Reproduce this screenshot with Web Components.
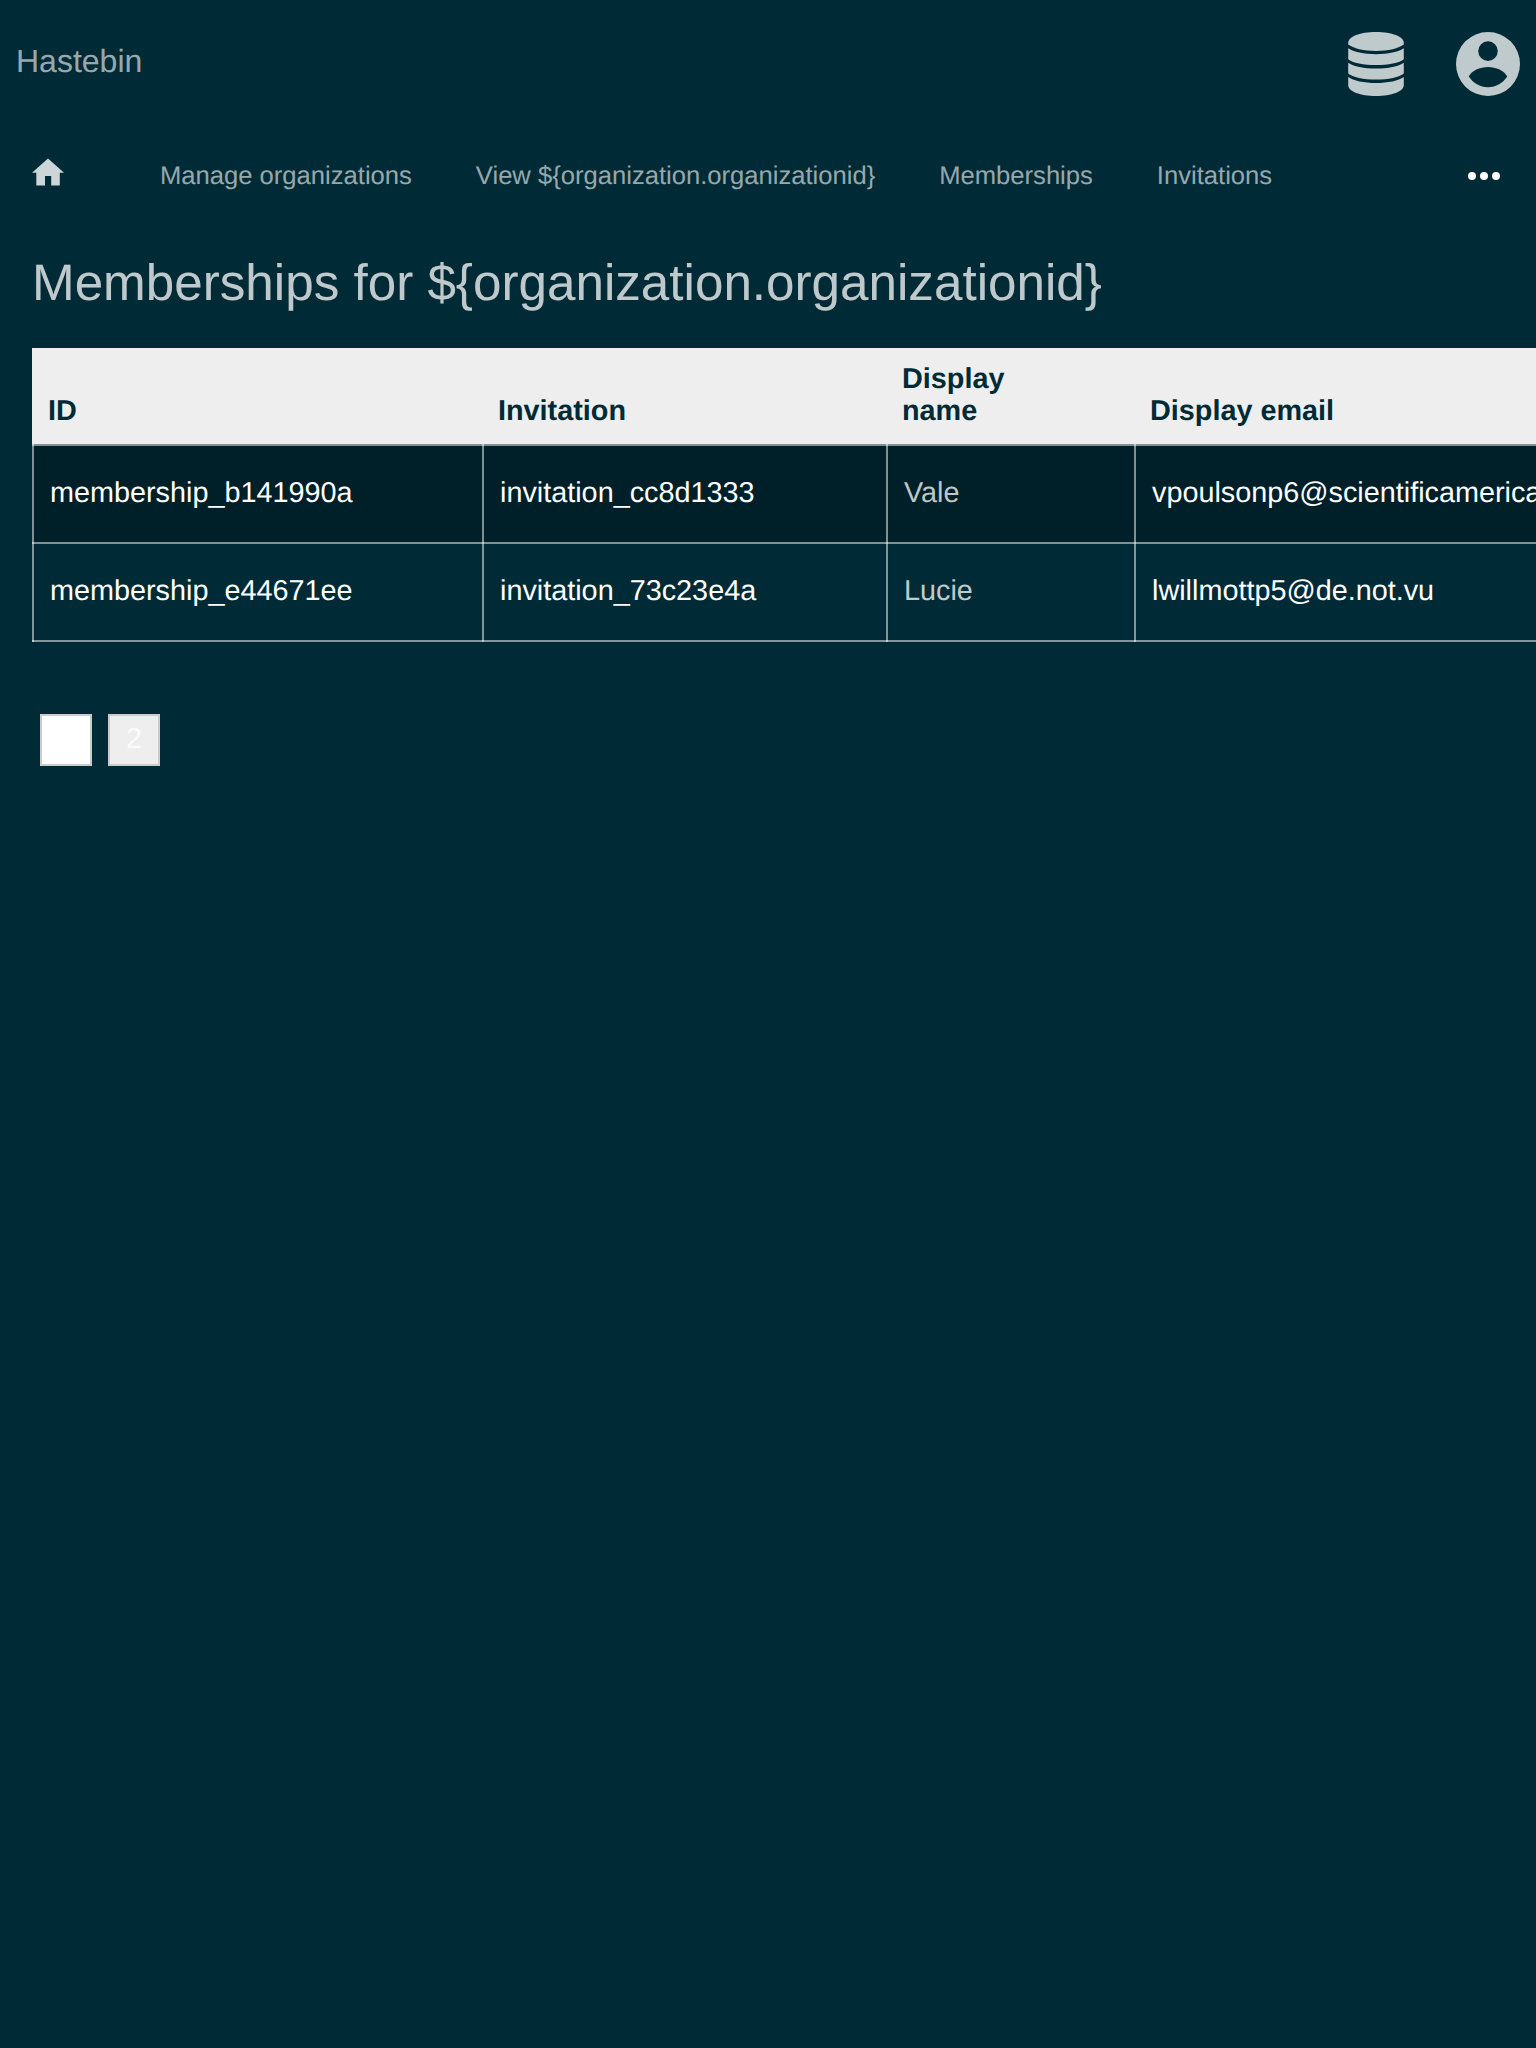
<!DOCTYPE html>
<html lang="en">
<head>
<meta charset="utf-8">
<title>Hastebin</title>
<style>
html,body{margin:0;height:100%;background:#002b36;overflow:hidden}
body{font-family:"Liberation Sans",Arial,sans-serif;color:#fff;text-rendering:geometricPrecision}
</style>
</head>
<body>
<hb-app></hb-app>
<script>
const define = (name, html) => customElements.define(name, class extends HTMLElement {
  constructor() {
    super();
    this.attachShadow({ mode: 'open' }).innerHTML = html;
  }
});

define('hb-header', `
<style>
:host{display:flex;align-items:center;justify-content:space-between;height:128px;padding:0 16px;box-sizing:border-box}
.brand{font-size:32px;line-height:36px;color:rgba(255,255,255,.6);padding-bottom:6px}
.tools{display:flex;gap:48px}
svg{display:block;width:64px;height:64px;fill:#bfcacd}
</style>
<div class="brand"><slot></slot></div>
<div class="tools">
<svg viewBox="0 0 64 64"><path d="M4.200 11C4.200 4.600 16 0 32 0s27.800 4.600 27.800 11v1.500C55 16.200 44 19 32 19S9 16.200 4.200 12.500z"/><path d="M4.200 16.300c5 3.700 16 5.900 27.800 5.900s22.800-2.200 27.800-5.900v10.900c-4 3.500-15.800 5.900-27.800 5.900S8.200 30.700 4.200 27.200z"/><path d="M4.200 30.700c5 3.700 16 5.900 27.800 5.900s22.800-2.200 27.800-5.900v10.700c-4 3.500-15.800 6.200-27.800 6.200S8.200 44.900 4.200 41.400z"/><path d="M4.200 45c5 3.700 16 6 27.800 6s22.800-2.300 27.800-6v8c0 6.400-12 11-27.800 11S4.200 59.400 4.200 53z"/></svg>
<svg viewBox="0 0 64 64"><path fill-rule="evenodd" d="M32 0a32 32 0 1 0 0 64a32 32 0 1 0 0-64zM32 9.300a9.800 9.800 0 1 1 0 19.600a9.800 9.800 0 1 1 0-19.600zM12.800 44.500C15.500 38.500 24 34.900 32 34.900s16.500 3.600 19.200 9.600C47 51 40 55.200 32 55.200S17 51 12.800 44.500z"/></svg>
</div>`);

define('hb-nav', `
<style>
:host{display:flex;align-items:center;height:96px;padding:0 36px 0 32px;box-sizing:border-box}
nav{display:flex;gap:64px;margin-left:96px;flex:1}
svg{display:block;fill:#ccd5d7}
.more{fill:#fff}
.home{margin-top:-8px}
</style>
<svg class="home" width="32" height="28" viewBox="0 0 32 28"><path d="M16 .5L0 14.800h4.300v12.700h8.700v-9.500h6.200v9.500h8.600V14.800H32z"/></svg>
<nav><slot></slot></nav>
<svg class="more" width="32" height="8" viewBox="0 0 32 8"><circle cx="4" cy="4" r="4"/><circle cx="16" cy="4" r="4"/><circle cx="28" cy="4" r="4"/></svg>`);

define('hb-link', `
<style>:host{display:block;font-size:25.6px;line-height:30px;color:rgba(255,255,255,.6);white-space:nowrap}</style><slot></slot>`);

define('hb-title', `
<style>:host{display:block}h1{margin:0;font-weight:400;font-size:51.2px;line-height:60px;color:rgba(255,255,255,.75);white-space:nowrap}</style><h1><slot></slot></h1>`);

define('hb-row', `
<style>
:host{display:grid;grid-template-columns:450px 404px 248px 560px;height:98px}
:host([head]){height:96px;background:#eee}
:host([odd]){height:100px;background:#002029}
</style><slot></slot>`);

define('hb-cell', `
<style>
:host{--line:linear-gradient(rgba(255,255,255,.5),rgba(255,255,255,.5));display:flex;align-items:center;box-sizing:border-box;padding:0 16px 4px 18px;font-size:28.8px;line-height:32px;color:#fff;white-space:nowrap;background:var(--line) 0 0/2px 100% no-repeat,var(--line) 0 100%/100% 2px no-repeat}
:host([first]){padding-top:2px;background:var(--line) 0 0/2px 100% no-repeat,var(--line) 0 100%/100% 2px no-repeat,var(--line) 0 0/100% 2px no-repeat}
:host([plain]){color:rgba(255,255,255,.75)}
:host([th]){align-items:flex-end;background:none;padding:0 88px 17px 16px;font-weight:700;color:#002b36;white-space:normal}
</style><slot></slot>`);

define('hb-table', `
<style>:host{display:block;overflow:hidden;margin-right:-32px}</style><slot></slot>`);

define('hb-page', `
<style>
:host{display:flex;align-items:center;justify-content:center;box-sizing:border-box;width:52px;height:52px;border:2px solid #ccc;background:#eee;color:rgba(255,255,255,.75);font-size:28.8px;line-height:32px;padding-bottom:3px}
:host([current]){background:#fff;color:#fff}
</style><slot></slot>`);

define('hb-app', `
<style>
:host{display:block}
main{display:flex;flex-direction:column;padding:29px 32px 0}
hb-table{margin-top:35px}
.pages{display:flex;gap:16px;padding:72px 8px 0}
</style>
<hb-header>Hastebin</hb-header>
<hb-nav><hb-link>Manage organizations</hb-link><hb-link>View \${organization.organizationid}</hb-link><hb-link>Memberships</hb-link><hb-link>Invitations</hb-link></hb-nav>
<main>
<hb-title>Memberships for \${organization.organizationid}</hb-title>
<hb-table>
<hb-row head><hb-cell th>ID</hb-cell><hb-cell th>Invitation</hb-cell><hb-cell th>Display name</hb-cell><hb-cell th>Display email</hb-cell></hb-row>
<hb-row odd><hb-cell first>membership_b141990a</hb-cell><hb-cell first>invitation_cc8d1333</hb-cell><hb-cell first plain>Vale</hb-cell><hb-cell first>vpoulsonp6@scientificamerican.com</hb-cell></hb-row>
<hb-row><hb-cell>membership_e44671ee</hb-cell><hb-cell>invitation_73c23e4a</hb-cell><hb-cell plain>Lucie</hb-cell><hb-cell>lwillmottp5@de.not.vu</hb-cell></hb-row>
</hb-table>
<div class="pages"><hb-page current>1</hb-page><hb-page>2</hb-page></div>
</main>`);
</script>
</body>
</html>
